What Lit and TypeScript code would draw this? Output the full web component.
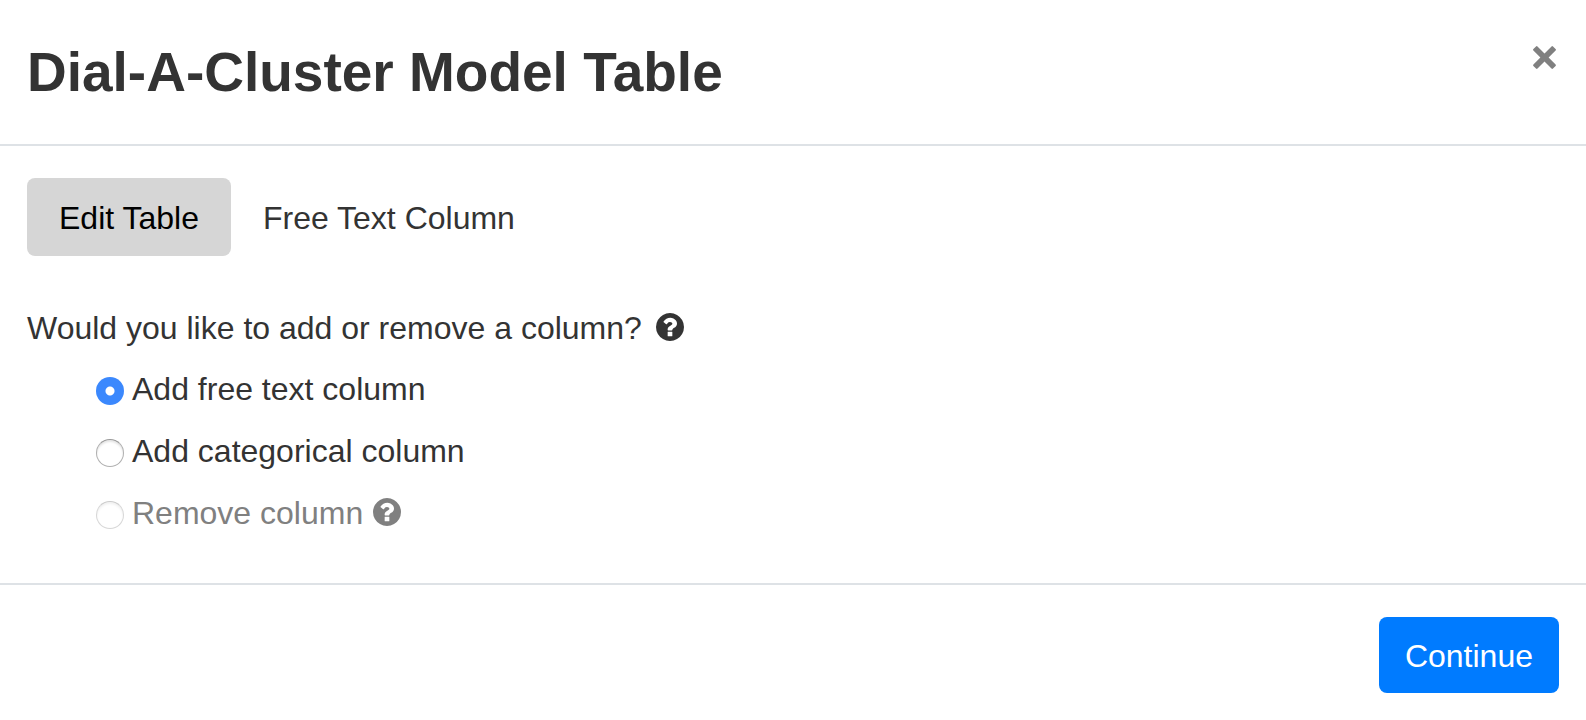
import { LitElement, css, html, svg } from "lit";
import { customElement, state } from "lit/decorators.js";

interface Choice {
  value: string;
  label: string;
  disabled?: boolean;
  help?: boolean;
}

const TABS = ["Edit Table", "Free Text Column"];

const CHOICES: Choice[] = [
  { value: "free", label: "Add free text column" },
  { value: "categorical", label: "Add categorical column" },
  { value: "remove", label: "Remove column", disabled: true, help: true },
];

const helpPath = svg`<path fill="currentColor" d="M1024 1376v-192q0-14-9-23t-23-9h-192q-14 0-23 9t-9 23v192q0 14 9 23t23 9h192q14 0 23-9t9-23zm256-672q0-88-55.5-163t-138.5-116-170.5-41q-243 0-371 213-15 24 8 42l132 100q7 6 19 6 16 0 25-12 53-68 86-92 34-24 86-24 48 0 85.5 26t37.5 59q0 38-20 61t-68 45q-63 28-115.5 86.5t-52.5 125.5v36q0 14 9 23t23 9h192q14 0 23-9t9-23q0-19 21.5-49.5t54.5-49.5q32-18 49-28.5t46-35 44.5-48 28-60.5 12.5-81zm384 192q0 209-103 385.5t-279.5 279.5-385.5 103-385.5-103-279.5-279.5-103-385.5 103-385.5 279.5-279.5 385.5-103 385.5 103 279.5 279.5 103 385.5z"/>`;

@customElement("app-root")
export class AppRoot extends LitElement {
  @state() private tab = TABS[0];
  @state() private choice = "free";

  static styles = css`
    :host {
      display: block;
      color: #333;
      background: #fff;
      font-family: "Liberation Sans", Arial, sans-serif;
      font-size: 32px;
    }
    button {
      font: inherit;
      border: 0;
      margin: 0;
      cursor: pointer;
    }
    .header {
      display: flex;
      justify-content: space-between;
      align-items: flex-start;
      padding: 30px 27px;
      border-bottom: 2px solid #dee2e6;
    }
    .title {
      margin: 0;
      font-size: 55px;
      line-height: 84px;
      font-weight: 700;
    }
    .close {
      display: flex;
      padding: 16px 3px;
      color: #808080;
      background: none;
    }
    .close svg {
      width: 23px;
      height: 23px;
    }
    .body {
      padding: 32px 27px 39px;
    }
    .tabs {
      display: flex;
      margin-bottom: 42px;
    }
    .tab {
      padding: 17px 32px 15px;
      line-height: 46px;
      color: #333;
      background: none;
      border-radius: 8px;
    }
    .tab.active {
      color: #000;
      background: #d6d6d6;
    }
    .choices {
      margin: 0;
      padding: 0;
      border: 0;
    }
    .row {
      display: flex;
      align-items: center;
      padding: 0;
      line-height: 62px;
    }
    .question {
      gap: 14px;
      line-height: 60px;
    }
    .option {
      gap: 8px;
      margin-left: 69px;
    }
    .option.disabled {
      color: #808080;
    }
    .help {
      width: 28px;
      height: 28px;
      flex: none;
      margin-bottom: 2px;
    }
    .option .help {
      margin-left: 2px;
    }
    .radio {
      appearance: none;
      box-sizing: border-box;
      width: 28px;
      height: 28px;
      margin: 4px 0 0;
      border: 1px solid #b0b0b0;
      border-top-color: #989898;
      border-radius: 50%;
      background: #fff;
      box-shadow: inset 0 2px 2px rgba(0, 0, 0, 0.1);
    }
    .radio:checked {
      border: 0;
      background: radial-gradient(circle, #fff 4px, #3b88fd 5px);
      box-shadow: none;
    }
    .radio:disabled {
      opacity: 0.5;
    }
    .footer {
      display: flex;
      justify-content: flex-end;
      padding: 32px 27px 27px;
      border-top: 2px solid #dee2e6;
    }
    .continue {
      padding: 16px 26px 14px;
      line-height: 46px;
      color: #fff;
      background: #007bff;
      border-radius: 8px;
    }
  `;

  private help() {
    return html`<svg class="help" viewBox="128 128 1536 1536" role="img" aria-label="Help">${helpPath}</svg>`;
  }

  render() {
    return html`
      <header class="header">
        <h1 class="title">Dial-A-Cluster Model Table</h1>
        <button class="close" type="button" aria-label="Close">
          <svg viewBox="0 0 23 23" aria-hidden="true">
            <path
              fill="currentColor"
              d="M.4 4.500Q-.3 3.700.4 3L3 .4Q3.700-.3 4.500.4L11.500 7.400 18.500.4Q19.300-.3 20 .4L22.600 3Q23.300 3.700 22.600 4.500L15.600 11.500 22.600 18.500Q23.300 19.300 22.600 20L20 22.600Q19.300 23.300 18.500 22.600L11.500 15.600 4.500 22.600Q3.700 23.300 3 22.600L.4 20Q-.3 19.300.4 18.500L7.400 11.500Z"
            />
          </svg>
        </button>
      </header>
      <main class="body">
        <nav class="tabs" role="tablist">
          ${TABS.map(
            (name) => html`<button
              class="tab ${name === this.tab ? "active" : ""}"
              type="button"
              role="tab"
              aria-selected=${name === this.tab}
              @click=${() => (this.tab = name)}
            >${name}</button>`
          )}
        </nav>
        <fieldset class="choices">
          <legend class="row question">
            <span>Would you like to add or remove a column?</span>${this.help()}
          </legend>
          ${CHOICES.map(
            (c) => html`<div class="row option ${c.disabled ? "disabled" : ""}">
              <input
                class="radio"
                type="radio"
                name="action"
                id=${c.value}
                .value=${c.value}
                .checked=${c.value === this.choice}
                ?disabled=${c.disabled}
                @change=${() => (this.choice = c.value)}
              />
              <label for=${c.value}>${c.label}</label>
              ${c.help ? this.help() : ""}
            </div>`
          )}
        </fieldset>
      </main>
      <footer class="footer">
        <button class="continue" type="button">Continue</button>
      </footer>
    `;
  }
}
